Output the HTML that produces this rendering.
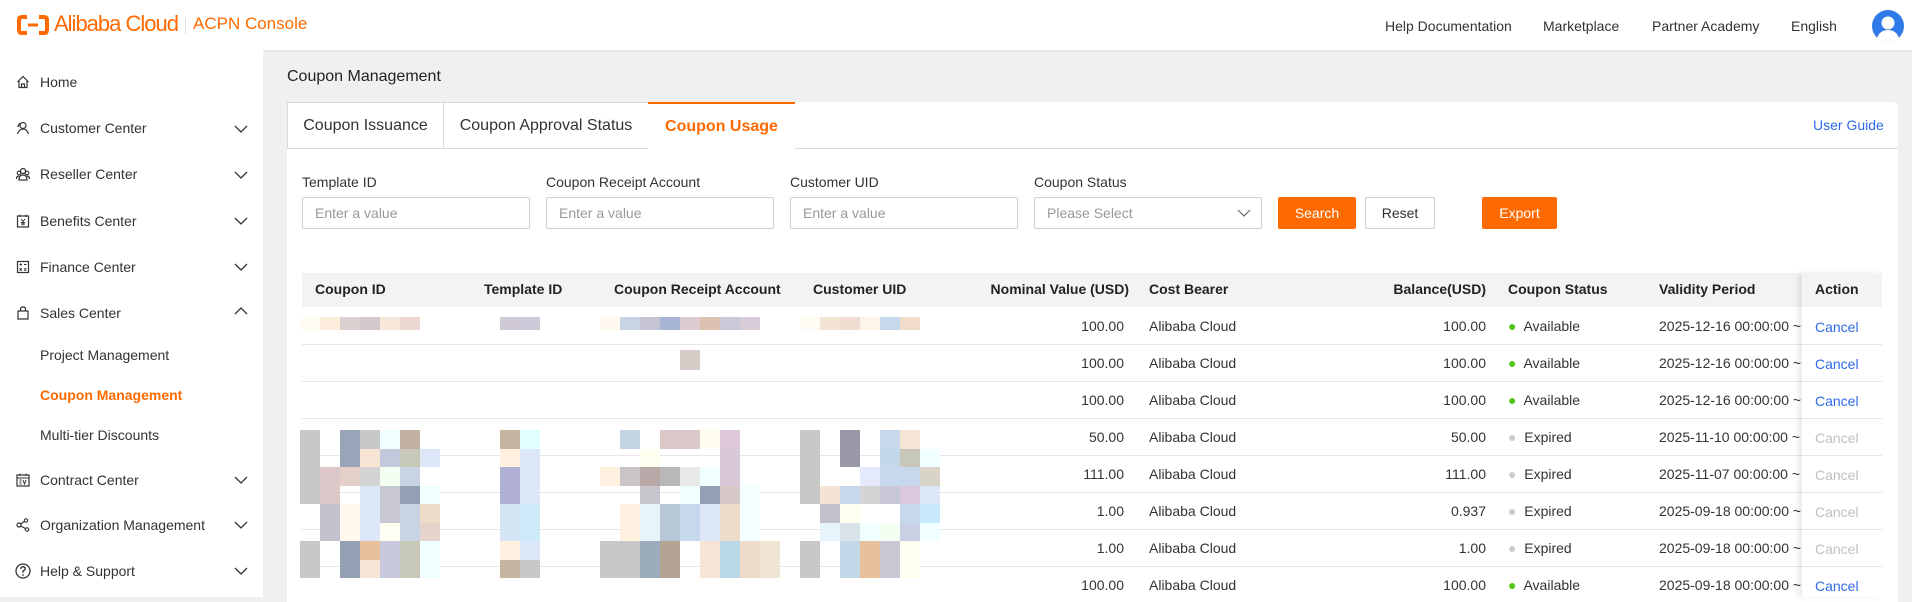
<!DOCTYPE html>
<html><head><meta charset="utf-8"><style>
*{box-sizing:border-box;margin:0;padding:0}
body{width:1912px;height:597px;overflow:hidden;background:#f0f0f0;font-family:"Liberation Sans",Arial,sans-serif;color:#333;font-size:14px;position:relative}
.a{position:absolute;white-space:nowrap}
.hdr{position:absolute;left:0;top:0;width:1912px;height:50px;background:#fff;box-shadow:0 1px 3px rgba(0,0,0,.06)}
.side{position:absolute;left:0;top:50px;width:263px;height:547px;background:#fff}
.mi{position:absolute;left:40px;font-size:14px;color:#333}
.ic{position:absolute;left:16px;width:14px;height:14px}
.chev{position:absolute;left:234px;width:14px;height:10px}
.card{position:absolute;left:287px;top:102px;width:1611px;height:500px;background:#fff;border-radius:6px 6px 0 0}
.tab{position:absolute;top:102px;height:47px;border:1px solid #d9d9d9;background:#fff;font-size:16px;line-height:45px;text-align:center}
.lbl{position:absolute;top:174px;font-size:14px}
.inp{position:absolute;top:197px;height:32px;border:1px solid #d0d0d0;border-radius:2px;font-size:14px;color:#999;padding-left:12px;line-height:30px}
.btn{position:absolute;top:197px;height:32px;border-radius:2px;line-height:32px;text-align:center;font-size:14px}
.th{position:absolute;top:281px;font-weight:bold;font-size:14px;color:#222}
.rl{position:absolute;left:302px;width:1580px;height:1px;background:#e6e6e6}
.c{position:absolute;font-size:14px;color:#333}
.r{text-align:right}
.g{display:grid;grid-template-columns:repeat(7,20px);grid-auto-rows:18.5px;position:absolute}
</style></head><body>
<div class="hdr">
 <svg class="a" style="left:17px;top:15px" width="32" height="20" viewBox="0 0 32 20"><path d="M10 2H5Q2 2 2 5V15Q2 18 5 18H10" fill="none" stroke="#ff6a00" stroke-width="4"/><path d="M22 2H27Q30 2 30 5V15Q30 18 27 18H22" fill="none" stroke="#ff6a00" stroke-width="4"/><rect x="11" y="8.5" width="10" height="3" fill="#ff6a00"/></svg>
 <div class="a" style="left:54px;top:11px;font-size:22px;color:#ff6a00;letter-spacing:-1px">Alibaba Cloud</div>
 <div class="a" style="left:185px;top:18px;width:1px;height:16px;background:#e0e0e0"></div>
 <div class="a" style="left:193px;top:14px;font-size:17px;color:#ff6a00">ACPN Console</div>
 <div class="a" style="left:1385px;top:18px;font-size:14px">Help Documentation</div>
 <div class="a" style="left:1543px;top:18px;font-size:14px">Marketplace</div>
 <div class="a" style="left:1652px;top:18px;font-size:14px">Partner Academy</div>
 <div class="a" style="left:1791px;top:18px;font-size:14px">English</div>
 <svg class="a" style="left:1872px;top:10px" width="32" height="32" viewBox="0 0 32 32"><circle cx="16" cy="16" r="16" fill="#2f7bea"/><circle cx="16" cy="13" r="6.5" fill="#fff"/><path d="M5 28Q8 20 16 20Q24 20 27 28Q22 32 16 32Q10 32 5 28Z" fill="#fff"/></svg>
</div>
<div class="side">
 <svg class="ic" style="top:25px" viewBox="0 0 14 14"><path d="M1.5 7L7 1.5 12.5 7M3 6V12.5H11V6M5.5 12.5V9H8.5V12.5" fill="none" stroke="#333" stroke-width="1.2"/></svg>
 <div class="mi" style="top:24px">Home</div>
 <svg class="ic" style="top:71px" viewBox="0 0 14 14"><circle cx="7" cy="4.5" r="3" fill="none" stroke="#333" stroke-width="1.2"/><path d="M1.5 13Q3 8 7 8Q11 8 12.5 13M4 2L1.5 6" fill="none" stroke="#333" stroke-width="1.2"/></svg>
 <div class="mi" style="top:70px">Customer Center</div>
 <svg class="ic" style="top:117px" viewBox="0 0 14 14"><circle cx="7" cy="4" r="2.5" fill="none" stroke="#333" stroke-width="1.2"/><circle cx="3" cy="6" r="1.8" fill="none" stroke="#333" stroke-width="1.1"/><circle cx="11" cy="6" r="1.8" fill="none" stroke="#333" stroke-width="1.1"/><path d="M3 13Q3 8 7 8Q11 8 11 13ZM0.5 12Q0.5 9 3 9M13.5 12Q13.5 9 11 9" fill="none" stroke="#333" stroke-width="1.2"/></svg>
 <div class="mi" style="top:116px">Reseller Center</div>
 <svg class="ic" style="top:164px" viewBox="0 0 14 14"><rect x="1.5" y="2" width="11" height="11" fill="none" stroke="#333" stroke-width="1.2"/><path d="M4 0.5V3M10 0.5V3M5 5L7 7.5 9 5M7 7.5V11.5M5 8.5H9M5 10H9" fill="none" stroke="#333" stroke-width="1"/></svg>
 <div class="mi" style="top:163px">Benefits Center</div>
 <svg class="ic" style="top:210px" viewBox="0 0 14 14"><rect x="1.5" y="1.5" width="11" height="11" fill="none" stroke="#333" stroke-width="1.2"/><path d="M3.5 4.5H6M4.75 3.3V5.7M8 4.5H10.5M3.6 8.3L5.9 10.6M5.9 8.3L3.6 10.6M8 8.7H10.5M8 10.3H10.5" stroke="#333" stroke-width="1"/></svg>
 <div class="mi" style="top:209px">Finance Center</div>
 <svg class="ic" style="top:256px" viewBox="0 0 14 14"><path d="M2 5H12V13H2ZM4.5 5V3Q4.5 1 7 1Q9.5 1 9.5 3V5" fill="none" stroke="#333" stroke-width="1.2"/></svg>
 <div class="mi" style="top:255px">Sales Center</div>
 <div class="mi" style="top:297px;left:40px">Project Management</div>
 <div class="mi" style="top:337px;left:40px;color:#ff6a00;font-weight:bold">Coupon Management</div>
 <div class="mi" style="top:377px;left:40px">Multi-tier Discounts</div>
 <svg class="ic" style="top:423px" viewBox="0 0 14 14"><rect x="1" y="2" width="12" height="11" fill="none" stroke="#333" stroke-width="1.2"/><path d="M4 0.5V3M10 0.5V3M1 5H13M3.5 7H5.5M3.5 9H5.5M3.5 11H5.5M7 7L8.5 11 10 7" fill="none" stroke="#333" stroke-width="1"/></svg>
 <div class="mi" style="top:422px">Contract Center</div>
 <svg class="ic" style="top:468px" viewBox="0 0 14 14"><circle cx="3" cy="7" r="2" fill="none" stroke="#333" stroke-width="1.2"/><circle cx="10" cy="2.5" r="1.7" fill="none" stroke="#333" stroke-width="1.1"/><circle cx="11" cy="11.5" r="1.7" fill="none" stroke="#333" stroke-width="1.1"/><path d="M4.7 6L8.5 3.3M4.7 8L9.6 10.6" stroke="#333" stroke-width="1.1"/></svg>
 <div class="mi" style="top:467px">Organization Management</div>
 <svg class="ic" style="top:513px;width:16px;height:16px;left:15px" viewBox="0 0 16 16"><circle cx="8" cy="8" r="7" fill="none" stroke="#333" stroke-width="1.3"/><path d="M5.8 6Q5.8 3.8 8 3.8Q10.2 3.8 10.2 5.8Q10.2 7.2 8 8V9.8" fill="none" stroke="#333" stroke-width="1.3"/><circle cx="8" cy="12" r="0.9" fill="#333"/></svg>
 <div class="mi" style="top:513px">Help &amp; Support</div>
 <svg class="chev" style="top:74px" viewBox="0 0 14 10"><path d="M1 2L7 8 13 2" fill="none" stroke="#333" stroke-width="1.3"/></svg>
 <svg class="chev" style="top:120px" viewBox="0 0 14 10"><path d="M1 2L7 8 13 2" fill="none" stroke="#333" stroke-width="1.3"/></svg>
 <svg class="chev" style="top:166px" viewBox="0 0 14 10"><path d="M1 2L7 8 13 2" fill="none" stroke="#333" stroke-width="1.3"/></svg>
 <svg class="chev" style="top:212px" viewBox="0 0 14 10"><path d="M1 2L7 8 13 2" fill="none" stroke="#333" stroke-width="1.3"/></svg>
 <svg class="chev" style="top:256px" viewBox="0 0 14 10"><path d="M1 8L7 2 13 8" fill="none" stroke="#333" stroke-width="1.3"/></svg>
 <svg class="chev" style="top:425px" viewBox="0 0 14 10"><path d="M1 2L7 8 13 2" fill="none" stroke="#333" stroke-width="1.3"/></svg>
 <svg class="chev" style="top:470px" viewBox="0 0 14 10"><path d="M1 2L7 8 13 2" fill="none" stroke="#333" stroke-width="1.3"/></svg>
 <svg class="chev" style="top:516px" viewBox="0 0 14 10"><path d="M1 2L7 8 13 2" fill="none" stroke="#333" stroke-width="1.3"/></svg>
</div>
<div class="a" style="left:287px;top:68px;font-size:16px;color:#222">Coupon Management</div>
<div class="card"></div>
<div class="a" style="left:287px;top:148px;width:1611px;height:1px;background:#d9d9d9"></div>
<div class="tab" style="left:287px;width:157px">Coupon Issuance</div>
<div class="tab" style="left:443px;width:206px">Coupon Approval Status</div>
<div class="tab" style="left:648px;width:147px;border:none;border-top:2px solid #ff6a00;border-bottom:1px solid #fff;color:#ff6a00;font-weight:bold;height:48px">Coupon Usage</div>
<div class="a" style="left:1813px;top:117px;font-size:14px;color:#2f6ae8">User Guide</div>
<div class="lbl" style="left:302px">Template ID</div>
<div class="lbl" style="left:546px">Coupon Receipt Account</div>
<div class="lbl" style="left:790px">Customer UID</div>
<div class="lbl" style="left:1034px">Coupon Status</div>
<div class="inp" style="left:302px;width:228px">Enter a value</div>
<div class="inp" style="left:546px;width:228px">Enter a value</div>
<div class="inp" style="left:790px;width:228px">Enter a value</div>
<div class="inp" style="left:1034px;width:228px">Please Select<svg style="position:absolute;right:10px;top:10px" width="14" height="10" viewBox="0 0 14 10"><path d="M1 2L7 8 13 2" fill="none" stroke="#666" stroke-width="1.2"/></svg></div>
<div class="btn" style="left:1278px;width:78px;background:#ff6a00;color:#fff">Search</div>
<div class="btn" style="left:1365px;width:70px;border:1px solid #d0d0d0;color:#333;line-height:30px">Reset</div>
<div class="btn" style="left:1482px;width:75px;background:#ff6a00;color:#fff">Export</div>
<div class="a" style="left:302px;top:273px;width:1580px;height:34px;background:#f2f3f5"></div>
<div class="th" style="left:315px">Coupon ID</div>
<div class="th" style="left:484px">Template ID</div>
<div class="th" style="left:614px">Coupon Receipt Account</div>
<div class="th" style="left:813px">Customer UID</div>
<div class="th r" style="left:924px;width:205px">Nominal Value (USD)</div>
<div class="th" style="left:1149px">Cost Bearer</div>
<div class="th r" style="left:1300px;width:186px">Balance(USD)</div>
<div class="th" style="left:1508px">Coupon Status</div>
<div class="th" style="left:1659px">Validity Period</div>
<div class="rl" style="top:344px"></div><div class="rl" style="top:381px"></div><div class="rl" style="top:418px"></div><div class="rl" style="top:455px"></div><div class="rl" style="top:492px"></div><div class="rl" style="top:529px"></div><div class="rl" style="top:566px"></div>
<div class="c r" style="left:1000px;width:124px;top:318px">100.00</div><div class="c" style="left:1149px;top:318px">Alibaba Cloud</div><div class="c r" style="left:1380px;width:106px;top:318px">100.00</div><div class="c" style="left:1508px;top:318px"><span style="color:#52c41a">●</span>&nbsp; Available</div><div class="c" style="left:1659px;top:318px">2025-12-16 00:00:00 ~</div>
<div class="c r" style="left:1000px;width:124px;top:355px">100.00</div><div class="c" style="left:1149px;top:355px">Alibaba Cloud</div><div class="c r" style="left:1380px;width:106px;top:355px">100.00</div><div class="c" style="left:1508px;top:355px"><span style="color:#52c41a">●</span>&nbsp; Available</div><div class="c" style="left:1659px;top:355px">2025-12-16 00:00:00 ~</div>
<div class="c r" style="left:1000px;width:124px;top:392px">100.00</div><div class="c" style="left:1149px;top:392px">Alibaba Cloud</div><div class="c r" style="left:1380px;width:106px;top:392px">100.00</div><div class="c" style="left:1508px;top:392px"><span style="color:#52c41a">●</span>&nbsp; Available</div><div class="c" style="left:1659px;top:392px">2025-12-16 00:00:00 ~</div>
<div class="c r" style="left:1000px;width:124px;top:429px">50.00</div><div class="c" style="left:1149px;top:429px">Alibaba Cloud</div><div class="c r" style="left:1380px;width:106px;top:429px">50.00</div><div class="c" style="left:1508px;top:429px"><span style="color:#ccc">●</span>&nbsp; Expired</div><div class="c" style="left:1659px;top:429px">2025-11-10 00:00:00 ~</div>
<div class="c r" style="left:1000px;width:124px;top:466px">111.00</div><div class="c" style="left:1149px;top:466px">Alibaba Cloud</div><div class="c r" style="left:1380px;width:106px;top:466px">111.00</div><div class="c" style="left:1508px;top:466px"><span style="color:#ccc">●</span>&nbsp; Expired</div><div class="c" style="left:1659px;top:466px">2025-11-07 00:00:00 ~</div>
<div class="c r" style="left:1000px;width:124px;top:503px">1.00</div><div class="c" style="left:1149px;top:503px">Alibaba Cloud</div><div class="c r" style="left:1380px;width:106px;top:503px">0.937</div><div class="c" style="left:1508px;top:503px"><span style="color:#ccc">●</span>&nbsp; Expired</div><div class="c" style="left:1659px;top:503px">2025-09-18 00:00:00 ~</div>
<div class="c r" style="left:1000px;width:124px;top:540px">1.00</div><div class="c" style="left:1149px;top:540px">Alibaba Cloud</div><div class="c r" style="left:1380px;width:106px;top:540px">1.00</div><div class="c" style="left:1508px;top:540px"><span style="color:#ccc">●</span>&nbsp; Expired</div><div class="c" style="left:1659px;top:540px">2025-09-18 00:00:00 ~</div>
<div class="c r" style="left:1000px;width:124px;top:577px">100.00</div><div class="c" style="left:1149px;top:577px">Alibaba Cloud</div><div class="c r" style="left:1380px;width:106px;top:577px">100.00</div><div class="c" style="left:1508px;top:577px"><span style="color:#52c41a">●</span>&nbsp; Available</div><div class="c" style="left:1659px;top:577px">2025-09-18 00:00:00 ~</div>
<div class="a" style="left:1802px;top:273px;width:80px;height:324px;background:#fff;box-shadow:-4px 0 5px rgba(0,0,0,.08)"></div>
<div class="a" style="left:1802px;top:273px;width:80px;height:34px;background:#f2f3f5"></div>
<div class="th" style="left:1815px">Action</div>
<div class="a" style="left:1802px;top:344px;width:80px;height:1px;background:#e6e6e6"></div><div class="a" style="left:1802px;top:381px;width:80px;height:1px;background:#e6e6e6"></div><div class="a" style="left:1802px;top:418px;width:80px;height:1px;background:#e6e6e6"></div><div class="a" style="left:1802px;top:455px;width:80px;height:1px;background:#e6e6e6"></div><div class="a" style="left:1802px;top:492px;width:80px;height:1px;background:#e6e6e6"></div><div class="a" style="left:1802px;top:529px;width:80px;height:1px;background:#e6e6e6"></div><div class="a" style="left:1802px;top:566px;width:80px;height:1px;background:#e6e6e6"></div>
<div class="c" style="left:1815px;top:319px;color:#2f6ae8">Cancel</div>
<div class="c" style="left:1815px;top:356px;color:#2f6ae8">Cancel</div>
<div class="c" style="left:1815px;top:393px;color:#2f6ae8">Cancel</div>
<div class="c" style="left:1815px;top:430px;color:#c0c0c0">Cancel</div>
<div class="c" style="left:1815px;top:467px;color:#c0c0c0">Cancel</div>
<div class="c" style="left:1815px;top:504px;color:#c0c0c0">Cancel</div>
<div class="c" style="left:1815px;top:541px;color:#c0c0c0">Cancel</div>
<div class="c" style="left:1815px;top:578px;color:#2f6ae8">Cancel</div>
<div class="g" style="left:300px;top:317px;grid-template-columns:repeat(6,20px);grid-auto-rows:13px"><i style="background:#fffbf2"></i><i style="background:#fcecdc"></i><i style="background:#dcd0d0"></i><i style="background:#d4c8cc"></i><i style="background:#f8e8dc"></i><i style="background:#ecd8d0"></i></div>
<div class="g" style="left:500px;top:317px;grid-template-columns:repeat(2,20px);grid-auto-rows:13px"><i style="background:#d0cad8"></i><i style="background:#cccad8"></i></div>
<div class="g" style="left:600px;top:317px;grid-template-columns:repeat(8,20px);grid-auto-rows:13px"><i style="background:#fff8ee"></i><i style="background:#c8d4e4"></i><i style="background:#c4c4d4"></i><i style="background:#a8b4d4"></i><i style="background:#dcccd0"></i><i style="background:#dcc0b0"></i><i style="background:#ccc8d8"></i><i style="background:#d8ccd8"></i></div>
<div class="g" style="left:800px;top:317px;grid-template-columns:repeat(6,20px);grid-auto-rows:13px"><i style="background:#fffbf4"></i><i style="background:#f4e4d4"></i><i style="background:#f0dcd0"></i><i style="background:#fff4e8"></i><i style="background:#c8d8ec"></i><i style="background:#f0dcc8"></i></div>
<div class="a" style="left:680px;top:350px;width:20px;height:20px;background:#d8ccc8"></div>
<div class="g" style="left:300px;top:430px"><i style="background:#c8c8c8"></i><i></i><i style="background:#98a4b8"></i><i style="background:#c8c8c8"></i><i style="background:#f0ffff"></i><i style="background:#c0b0a0"></i><i></i><i style="background:#c8c8c8"></i><i></i><i style="background:#98a4b8"></i><i style="background:#f6e4d4"></i><i style="background:#c4c8dc"></i><i style="background:#c8c8b8"></i><i style="background:#dce8f8"></i><i style="background:#c8c8c8"></i><i style="background:#dcc8c8"></i><i style="background:#e4d0c8"></i><i style="background:#d4d4d4"></i><i style="background:#f4fff4"></i><i style="background:#c8d4e4"></i><i></i><i style="background:#c8c8c8"></i><i style="background:#dcc8c8"></i><i></i><i style="background:#dce8f8"></i><i style="background:#c8c8d4"></i><i style="background:#94a0b4"></i><i style="background:#f0ffff"></i><i></i><i style="background:#c4c0cc"></i><i style="background:#fff8ec"></i><i style="background:#dce8f8"></i><i style="background:#c8c8d4"></i><i style="background:#c8d4e4"></i><i style="background:#eedcc8"></i><i></i><i style="background:#c4c0cc"></i><i style="background:#fff8ec"></i><i style="background:#dce8f8"></i><i style="background:#fffff4"></i><i style="background:#c8d4e4"></i><i style="background:#e4d4cc"></i><i style="background:#c8c8c8"></i><i></i><i style="background:#94a0b4"></i><i style="background:#e8c09c"></i><i style="background:#c8c8dc"></i><i style="background:#c8c8b8"></i><i style="background:#f0ffff"></i><i style="background:#c8c8c8"></i><i></i><i style="background:#94a0b4"></i><i style="background:#f6e4d4"></i><i style="background:#c8c8dc"></i><i style="background:#c8c8b8"></i><i style="background:#f0ffff"></i></div>
<div class="g" style="left:500px;top:430px;grid-template-columns:repeat(2,20px)"><i style="background:#c4b4a0"></i><i style="background:#e0ffff"></i><i style="background:#fff0e0"></i><i style="background:#dce8f8"></i><i style="background:#b0b0d4"></i><i style="background:#dce8f8"></i><i style="background:#b0b0d4"></i><i style="background:#dce8f8"></i><i style="background:#d4e4f4"></i><i style="background:#cceaf8"></i><i style="background:#d4e4f4"></i><i style="background:#cceaf8"></i><i style="background:#fff0e0"></i><i style="background:#dce8f8"></i><i style="background:#c4b4a0"></i><i style="background:#c8c8c8"></i></div>
<div class="g" style="left:600px;top:430px;grid-template-columns:repeat(9,20px)"><i></i><i style="background:#c4d4e4"></i><i></i><i style="background:#dcc8c8"></i><i style="background:#dcc8c8"></i><i style="background:#fffcf0"></i><i style="background:#dcc8d8"></i><i></i><i></i><i></i><i></i><i style="background:#fffff0"></i><i></i><i></i><i></i><i style="background:#d8c8d8"></i><i></i><i></i><i style="background:#fff0e0"></i><i style="background:#c8c4c8"></i><i style="background:#b8a8a8"></i><i style="background:#b8b8b8"></i><i style="background:#e8e8e8"></i><i style="background:#f0ffff"></i><i style="background:#d8c8d8"></i><i></i><i></i><i></i><i></i><i style="background:#c8c4cc"></i><i></i><i style="background:#f0ffff"></i><i style="background:#94a0b4"></i><i style="background:#d8c8c8"></i><i style="background:#f4ffff"></i><i></i><i></i><i style="background:#fff0e0"></i><i style="background:#e8f4fc"></i><i style="background:#b8c8d8"></i><i style="background:#c8d8ec"></i><i style="background:#dce8f8"></i><i style="background:#ecdcc8"></i><i style="background:#f4ffff"></i><i></i><i></i><i style="background:#fff0e0"></i><i style="background:#e8f4fc"></i><i style="background:#b8c8d8"></i><i style="background:#c8d8ec"></i><i style="background:#dce8f8"></i><i style="background:#ecdcc8"></i><i style="background:#f4ffff"></i><i></i><i style="background:#c8c8c8"></i><i style="background:#c8c8c8"></i><i style="background:#9cacbc"></i><i style="background:#b4a494"></i><i></i><i style="background:#f6e4d4"></i><i style="background:#b8d8e8"></i><i style="background:#ecdcc8"></i><i style="background:#f0e4d4"></i><i style="background:#c8c8c8"></i><i style="background:#c8c8c8"></i><i style="background:#9cacbc"></i><i style="background:#b4a494"></i><i></i><i style="background:#f6e4d4"></i><i style="background:#b8d8e8"></i><i style="background:#ecdcc8"></i><i style="background:#f0e4d4"></i></div>
<div class="g" style="left:800px;top:430px"><i style="background:#c8c8c8"></i><i></i><i style="background:#9898a8"></i><i></i><i style="background:#c8d8ec"></i><i style="background:#f6e4d4"></i><i></i><i style="background:#c8c8c8"></i><i></i><i style="background:#9898a8"></i><i></i><i style="background:#c0d8e8"></i><i style="background:#c8c8b8"></i><i style="background:#f0ffff"></i><i style="background:#c8c8c8"></i><i></i><i></i><i style="background:#e4eafc"></i><i style="background:#c8d8ec"></i><i style="background:#c8d8ec"></i><i style="background:#d8d4c8"></i><i style="background:#c8c8c8"></i><i style="background:#f4e4d4"></i><i style="background:#c8d8ec"></i><i style="background:#d4d4d4"></i><i style="background:#c8c8d8"></i><i style="background:#dcc8dc"></i><i style="background:#dce8f8"></i><i></i><i style="background:#c4c0cc"></i><i style="background:#fffff0"></i><i></i><i></i><i style="background:#c8d8ec"></i><i style="background:#c8eafc"></i><i></i><i style="background:#e8f4fc"></i><i style="background:#d8e4e8"></i><i style="background:#f0ffff"></i><i style="background:#f4fff4"></i><i style="background:#c8d0e4"></i><i style="background:#f0ffff"></i><i style="background:#c8c8c8"></i><i></i><i style="background:#c0d8e8"></i><i style="background:#e8c09c"></i><i style="background:#c8c8d4"></i><i style="background:#fffff0"></i><i></i><i style="background:#c8c8c8"></i><i></i><i style="background:#c0d8e8"></i><i style="background:#e8c09c"></i><i style="background:#c8c8d4"></i><i style="background:#fffff0"></i><i></i></div>
</body></html>
